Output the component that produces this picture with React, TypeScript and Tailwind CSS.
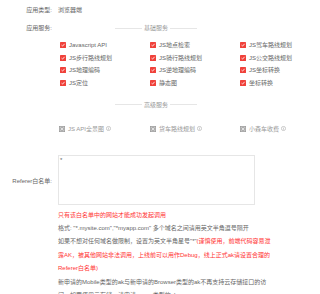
import React from "react";

const font = { fontFamily: '"Liberation Sans", "Noto Sans CJK SC", sans-serif' };

function Check() {
  return (
    <svg width="6" height="6" viewBox="0 0 6 6" className="shrink-0">
      <rect width="6" height="6" rx="0.6" fill="#f0413a" />
      <path d="M1.5 3.1 L2.6 4.1 L4.6 1.8" stroke="#fff" strokeWidth="0.8" fill="none" />
    </svg>
  );
}

function Disabled() {
  return (
    <svg width="6" height="6" viewBox="0 0 6 6" className="shrink-0">
      <rect width="6" height="6" fill="#9a9a9a" />
      <rect x="1" y="1" width="4" height="4" fill="none" stroke="#e8e8e8" strokeWidth="0.5" />
      <path d="M1.8 1.8 L4.2 4.2 M4.2 1.8 L1.8 4.2" stroke="#fff" strokeWidth="0.7" />
    </svg>
  );
}

function Info() {
  return (
    <svg width="5" height="5" viewBox="0 0 5 5" className="shrink-0 ml-[2px]">
      <circle cx="2.5" cy="2.5" r="2.1" fill="none" stroke="#999" strokeWidth="0.5" />
      <path d="M2.5 2.1 V3.7 M2.5 1.2 V1.6" stroke="#999" strokeWidth="0.5" />
    </svg>
  );
}

function Divider({ text }: { text: string }) {
  return (
    <div className="flex items-center mx-[57px] gap-[2px]">
      <div className="flex-1 h-px bg-[#e6e6e6]" />
      <span className="text-[6px] text-[#999] leading-none">{text}</span>
      <div className="flex-1 h-px bg-[#e6e6e6]" />
    </div>
  );
}

const services = [
  "Javascript API", "JS地点检索", "JS驾车路线规划",
  "JS步行路线规划", "JS骑行路线规划", "JS公交路线规划",
  "JS地理编码", "JS逆地理编码", "JS坐标转换",
  "JS定位", "静态图", "坐标转换",
];

export default function App() {
  return (
    <div className="w-[320px] h-[294px] bg-white overflow-hidden text-[#666] text-[6px]" style={font}>
      <div className="flex items-center h-[10px] mt-[5px]">
        <div className="w-[52px] text-right shrink-0">应用类型:</div>
        <div className="ml-[6px]">浏览器端</div>
      </div>
      <div className="flex items-center h-[10px] mt-[8px]">
        <div className="w-[52px] text-right shrink-0">应用服务:</div>
        <div className="ml-[6px] w-[196px]">
          <Divider text="基础服务" />
        </div>
      </div>
      <div className="ml-[60px] mt-[9px] grid grid-cols-[90px_90px_90px] gap-y-[6.5px]">
        {services.map((s) => (
          <div key={s} className="flex items-center h-[6px]">
            <Check />
            <span className="ml-[3px] leading-none whitespace-nowrap">{s}</span>
          </div>
        ))}
      </div>
      <div className="ml-[58px] w-[196px] mt-[16px]">
        <Divider text="高级服务" />
      </div>
      <div className="ml-[59px] mt-[18px] grid grid-cols-[91px_90px_90px]">
        {["JS API全景图", "货车路线规划", "小森车收费"].map((s) => (
          <div key={s} className="flex items-center h-[6px]">
            <Disabled />
            <span className="ml-[3px] leading-none whitespace-nowrap text-[#999]">{s}</span>
            <Info />
          </div>
        ))}
      </div>
      <div className="flex mt-[23px]">
        <div className="w-[52px] text-right shrink-0 pt-[22px]">Referer白名单:</div>
        <div className="ml-[6px] w-[197px] h-[50px] border border-[#e6e6e6] px-[1px] py-[1px] text-[6px] leading-[7px] text-[#666]">*</div>
      </div>
      <div className="ml-[58px] mt-[4px] leading-[13.4px] whitespace-nowrap">
        <div className="text-[#f33]">只有该白名单中的网站才能成功发起调用</div>
        <div>格式: "*.mysite.com","*myapp.com" 多个域名之间请用英文半角逗号隔开</div>
        <div>
          如果不想对任何域名做限制，设置为英文半角星号"*"<span className="text-[#f33]">(谨慎使用，前端代码容易泄</span>
        </div>
        <div className="text-[#f33]">露AK，被其他网站非法调用，上线前可以用作Debug，线上正式ak请设置合理的</div>
        <div className="text-[#f33]">Referer白名单)</div>
        <div>新申请的Mobile类型的ak与新申请的Browser类型的ak不再支持云存储接口的访</div>
        <div>问，如要使用云存储，请申请server类型的ak</div>
      </div>
    </div>
  );
}
